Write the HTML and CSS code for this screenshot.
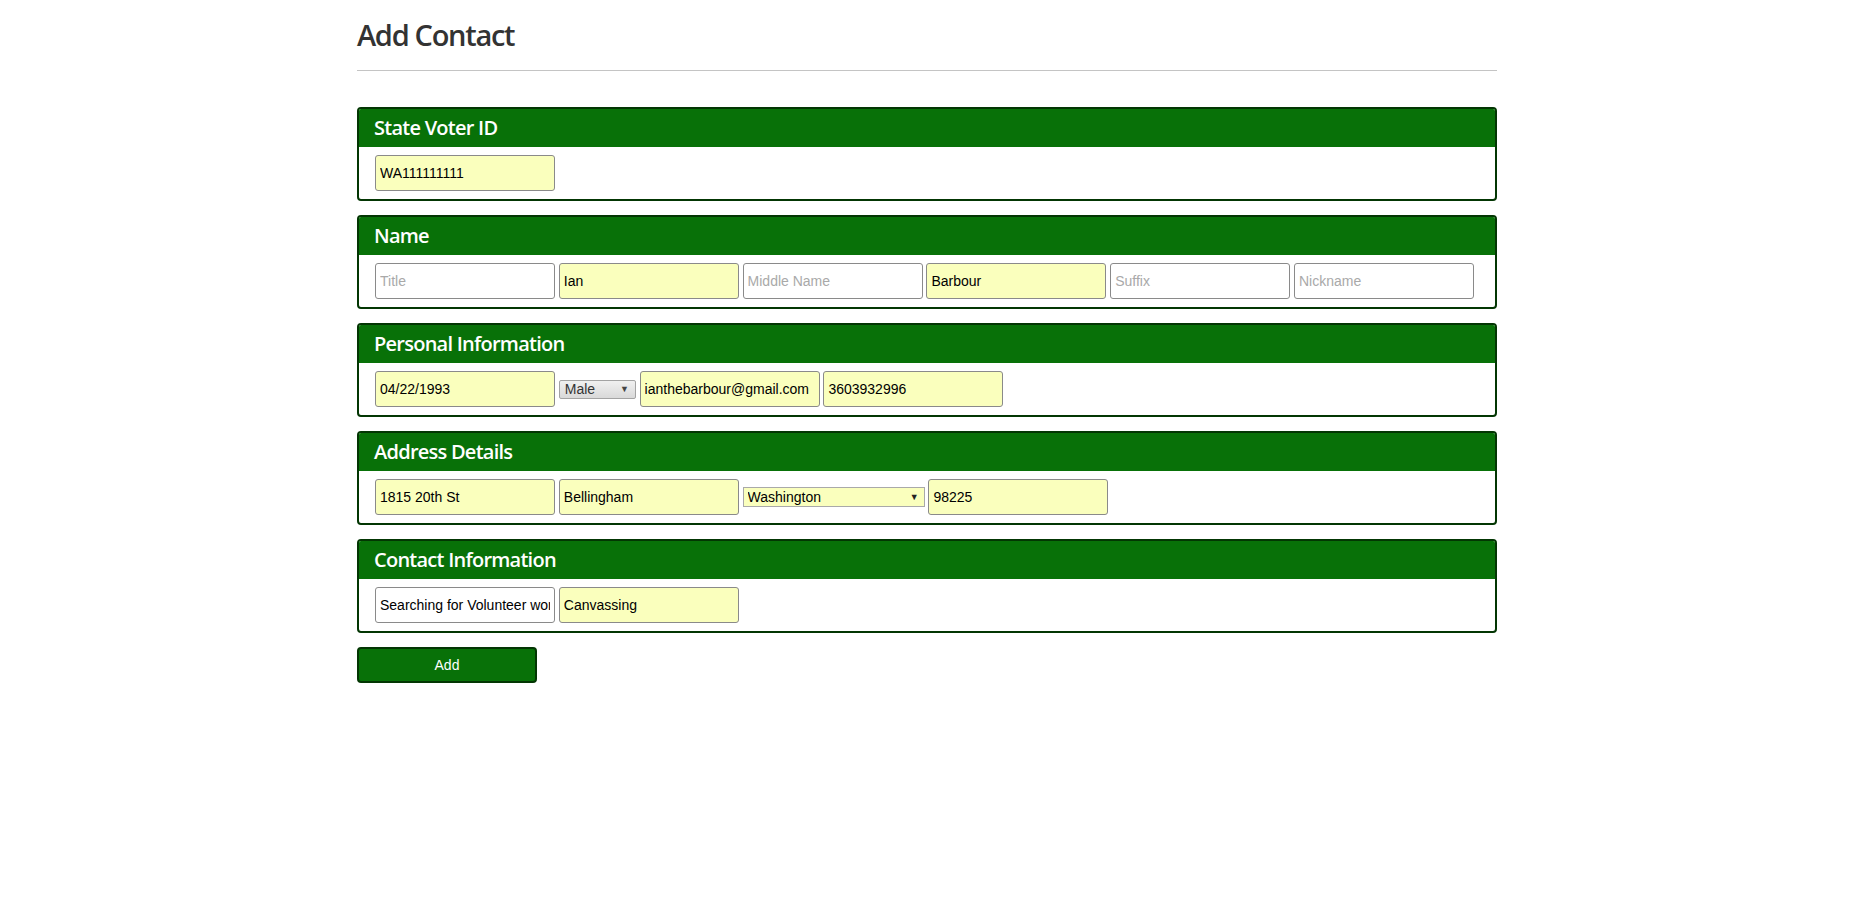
FILE: index.html
```html
<!DOCTYPE html>
<html lang="en">
<head>
<meta charset="utf-8">
<title>Add Contact</title>
<link rel="stylesheet" href="styles.css">
</head>
<body>
<div class="container">
  <h1 class="page-title">Add Contact</h1>
  <hr class="rule">

  <form class="contact-form">
    <section class="panel">
      <h3 class="panel-heading">State Voter ID</h3>
      <div class="panel-body">
        <input class="field filled" type="text" value="WA111111111">
      </div>
    </section>

    <section class="panel">
      <h3 class="panel-heading">Name</h3>
      <div class="panel-body">
        <input class="field" type="text" placeholder="Title">
        <input class="field filled" type="text" value="Ian">
        <input class="field" type="text" placeholder="Middle Name">
        <input class="field filled" type="text" value="Barbour">
        <input class="field" type="text" placeholder="Suffix">
        <input class="field" type="text" placeholder="Nickname">
      </div>
    </section>

    <section class="panel">
      <h3 class="panel-heading">Personal Information</h3>
      <div class="panel-body">
        <input class="field filled" type="text" value="04/22/1993">
        <span class="select-wrap select-small">
          <select class="select select-grey"><option>Male</option><option>Female</option></select>
          <span class="caret">&#9660;</span>
        </span>
        <input class="field filled" type="text" value="ianthebarbour@gmail.com">
        <input class="field filled" type="text" value="3603932996">
      </div>
    </section>

    <section class="panel">
      <h3 class="panel-heading">Address Details</h3>
      <div class="panel-body">
        <input class="field filled" type="text" value="1815 20th St">
        <input class="field filled" type="text" value="Bellingham">
        <span class="select-wrap select-wide">
          <select class="select select-yellow"><option>Washington</option></select>
          <span class="caret">&#9660;</span>
        </span>
        <input class="field filled" type="text" value="98225">
      </div>
    </section>

    <section class="panel">
      <h3 class="panel-heading">Contact Information</h3>
      <div class="panel-body">
        <input class="field" type="text" value="Searching for Volunteer work">
        <input class="field filled" type="text" value="Canvassing">
      </div>
    </section>

    <button class="btn-add" type="button">Add</button>
  </form>
</div>
</body>
</html>
```

FILE: styles.css
```css
* {
  box-sizing: border-box;
}

html, body {
  margin: 0;
  padding: 0;
  background: #ffffff;
}

body {
  font-family: "Liberation Sans", Arial, sans-serif;
  font-size: 14px;
  color: #000;
}

.container {
  width: 1140px;
  margin: 0 auto;
}

.page-title {
  font-family: "Open Sans", "Noto Sans", sans-serif;
  font-weight: 600;
  font-size: 29px;
  line-height: 33px;
  letter-spacing: -1.3px;
  color: #333333;
  margin: 18px 0 0 0;
}

.rule {
  border: 0;
  border-top: 1px solid #c4c4c4;
  margin: 19px 0 0 0;
  height: 0;
}

.contact-form {
  display: flex;
  flex-direction: column;
  align-items: flex-start;
  gap: 14px;
  padding-top: 36px;
}

.panel {
  width: 100%;
  border: 2px solid #033603;
  border-radius: 4px;
  overflow: hidden;
  background: #fff;
}

.panel-heading {
  margin: 0;
  height: 38px;
  padding: 2px 15px 2px 15px;
  background: #087108;
  color: #ffffff;
  font-family: "Open Sans", "Noto Sans", sans-serif;
  font-weight: 600;
  font-size: 20px;
  line-height: 34px;
  letter-spacing: -0.75px;
}

.panel-body {
  display: flex;
  align-items: center;
  gap: 3.8px;
  padding: 8px 16px;
}

.field {
  width: 180px;
  height: 36px;
  flex: none;
  border: 1px solid #8a8a8a;
  border-radius: 3px;
  padding: 0 4px;
  margin: 0;
  background: #ffffff;
  font-family: "Liberation Sans", Arial, sans-serif;
  font-size: 14px;
  color: #000;
  outline: none;
}

.field::placeholder {
  color: #a9a9a9;
}

.field.filled {
  background: #faffbd;
}

.select-wrap {
  position: relative;
  flex: none;
  display: block;
}

.select {
  -webkit-appearance: none;
  appearance: none;
  display: block;
  margin: 0;
  font-family: "Liberation Sans", Arial, sans-serif;
  font-size: 14px;
  outline: none;
}

.select-small .select {
  width: 77px;
  height: 19px;
  padding: 0 0 0 5px;
  line-height: 17px;
  border: 1px solid #a3a3a3;
  border-radius: 2px;
  background: linear-gradient(#f0f0f0, #d9d9d9);
  color: #333;
}

.select-wide .select {
  width: 182px;
  height: 20px;
  padding: 0 0 0 4px;
  line-height: 18px;
  border: 1px solid #a9a9a9;
  border-radius: 0;
  background: #faffbd;
  color: #000;
}

.caret {
  position: absolute;
  top: 50%;
  transform: translateY(-50%);
  font-size: 9px;
  line-height: 9px;
  color: #222;
  pointer-events: none;
}

.select-small .caret {
  right: 7px;
  color: #444;
}

.select-wide .caret {
  right: 6px;
}

.btn-add {
  width: 180px;
  height: 36px;
  margin: 0;
  padding: 0;
  border: 2px solid #033603;
  border-radius: 4px;
  background: #087108;
  color: #ffffff;
  font-family: "Liberation Sans", Arial, sans-serif;
  font-size: 14px;
  cursor: pointer;
}
```
